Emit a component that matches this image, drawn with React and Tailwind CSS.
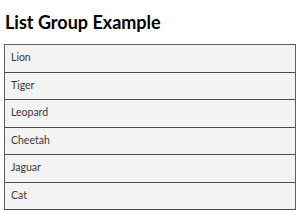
export default function App() {
  const animals = ["Lion", "Tiger", "Leopard", "Cheetah", "Jaguar", "Cat"];

  return (
    <div className="w-[300px] h-[210px] bg-white font-['Lato',sans-serif] overflow-hidden">
      <h1 className="pl-[5px] pt-[10px] text-[18px] leading-[24px] font-bold text-black">
        List Group Example
      </h1>
      <ul className="mx-[4px] mt-[10px] border-t border-x border-[#5f5f5f]">
        {animals.map((name) => (
          <li
            key={name}
            className="h-[27.5px] flex items-center pl-[6px] bg-[#f3f3f3] border-b border-[#4a4a4a] text-[10.5px] text-[#3a3a3a]"
          >
            {name}
          </li>
        ))}
      </ul>
    </div>
  );
}
